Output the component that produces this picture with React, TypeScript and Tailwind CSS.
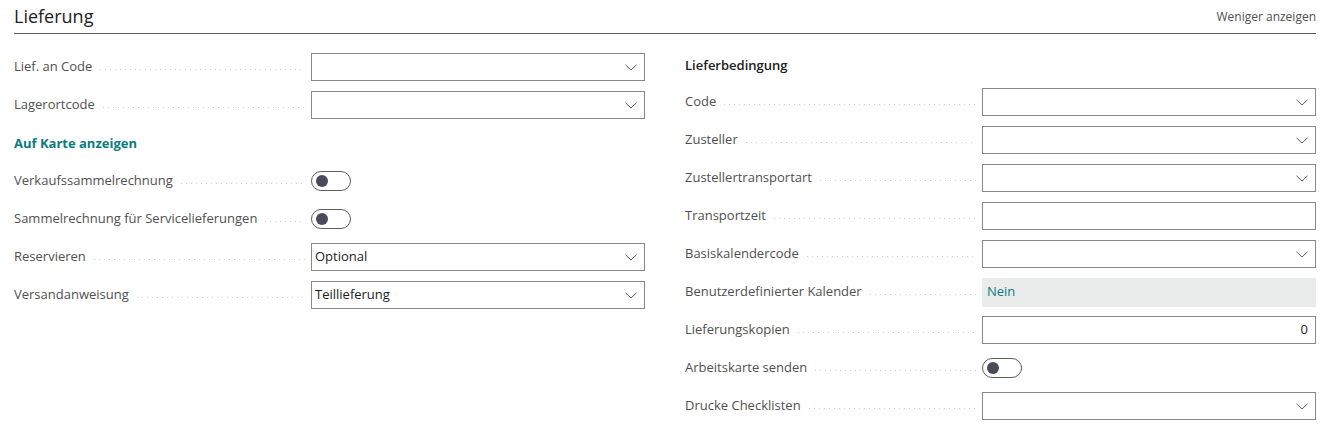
import React from 'react';

type Kind = 'select' | 'text' | 'toggle' | 'readonly' | 'number';

interface FieldDef {
  label: string;
  kind: Kind;
  value?: string;
}

const leftFields: FieldDef[] = [
  { label: 'Lief. an Code', kind: 'select' },
  { label: 'Lagerortcode', kind: 'select' },
];

const invoiceFields: FieldDef[] = [
  { label: 'Verkaufssammelrechnung', kind: 'toggle' },
  { label: 'Sammelrechnung für Servicelieferungen', kind: 'toggle' },
  { label: 'Reservieren', kind: 'select', value: 'Optional' },
  { label: 'Versandanweisung', kind: 'select', value: 'Teillieferung' },
];

const rightFields: FieldDef[] = [
  { label: 'Code', kind: 'select' },
  { label: 'Zusteller', kind: 'select' },
  { label: 'Zustellertransportart', kind: 'select' },
  { label: 'Transportzeit', kind: 'text' },
  { label: 'Basiskalendercode', kind: 'select' },
  { label: 'Benutzerdefinierter Kalender', kind: 'readonly', value: 'Nein' },
  { label: 'Lieferungskopien', kind: 'number', value: '0' },
  { label: 'Arbeitskarte senden', kind: 'toggle' },
  { label: 'Drucke Checklisten', kind: 'select' },
];

function Chevron() {
  return (
    <svg width="12" height="7" viewBox="0 0 12 7" fill="none" className="text-[#605e5c]">
      <path d="M0.5 0.8 L6 6 L11.5 0.8" stroke="currentColor" strokeWidth="1" />
    </svg>
  );
}

function Control({ field }: { field: FieldDef }) {
  if (field.kind === 'toggle') {
    return (
      <div className="w-[40px] h-[20px] rounded-full border border-[#605e5c] flex items-center px-[4px] bg-white">
        <div className="w-[12px] h-[12px] rounded-full bg-[#494b5c]" />
      </div>
    );
  }
  if (field.kind === 'readonly') {
    return (
      <div className="flex-1 h-[29px] bg-[#eaebeb] flex items-center px-[5px] text-[#0a7b80]">
        {field.value}
      </div>
    );
  }
  return (
    <div className="flex-1 h-[28px] border border-[#8a8886] bg-white flex items-center pl-[3px] pr-[7px] text-[#212121]">
      <span className={field.kind === 'number' ? 'flex-1 text-right' : 'flex-1'}>{field.value}</span>
      {field.kind === 'select' && <Chevron />}
    </div>
  );
}

function Row({ field }: { field: FieldDef }) {
  return (
    <div className="h-[38px] flex items-center">
      <div className="w-[297px] shrink-0 flex items-center pr-[6px]">
        <span className="text-[#505050] whitespace-nowrap">{field.label}</span>
        <div className="flex-1 ml-[8px] mt-[5px] h-[1px] bg-[linear-gradient(to_right,#cfcfcf_1px,transparent_1px)] bg-[length:5px_1px] bg-repeat-x" />
      </div>
      <Control field={field} />
    </div>
  );
}

export default function App() {
  return (
    <div className="w-[1329px] h-[434px] bg-white pl-[14px] pr-[13px] text-[13px] font-['Segoe_UI','Open_Sans',sans-serif]">
      <div className="h-[34px] flex items-center justify-between border-b border-[#605e5c]">
        <h2 className="text-[18px] text-[#212121] pb-[1px]">Lieferung</h2>
        <button className="text-[12px] text-[#505050]">Weniger anzeigen</button>
      </div>

      <div className="mt-[14px] flex gap-[40px]">
        <div className="flex-1">
          {leftFields.map((f) => (
            <Row key={f.label} field={f} />
          ))}
          <div className="h-[38px] flex items-center pt-[1px] font-bold text-[#0a7b80]">Auf Karte anzeigen</div>
          {invoiceFields.map((f) => (
            <Row key={f.label} field={f} />
          ))}
        </div>

        <div className="flex-1">
          <div className="h-[35px] flex items-center font-semibold text-[#212121]">Lieferbedingung</div>
          {rightFields.map((f) => (
            <Row key={f.label} field={f} />
          ))}
        </div>
      </div>
    </div>
  );
}
